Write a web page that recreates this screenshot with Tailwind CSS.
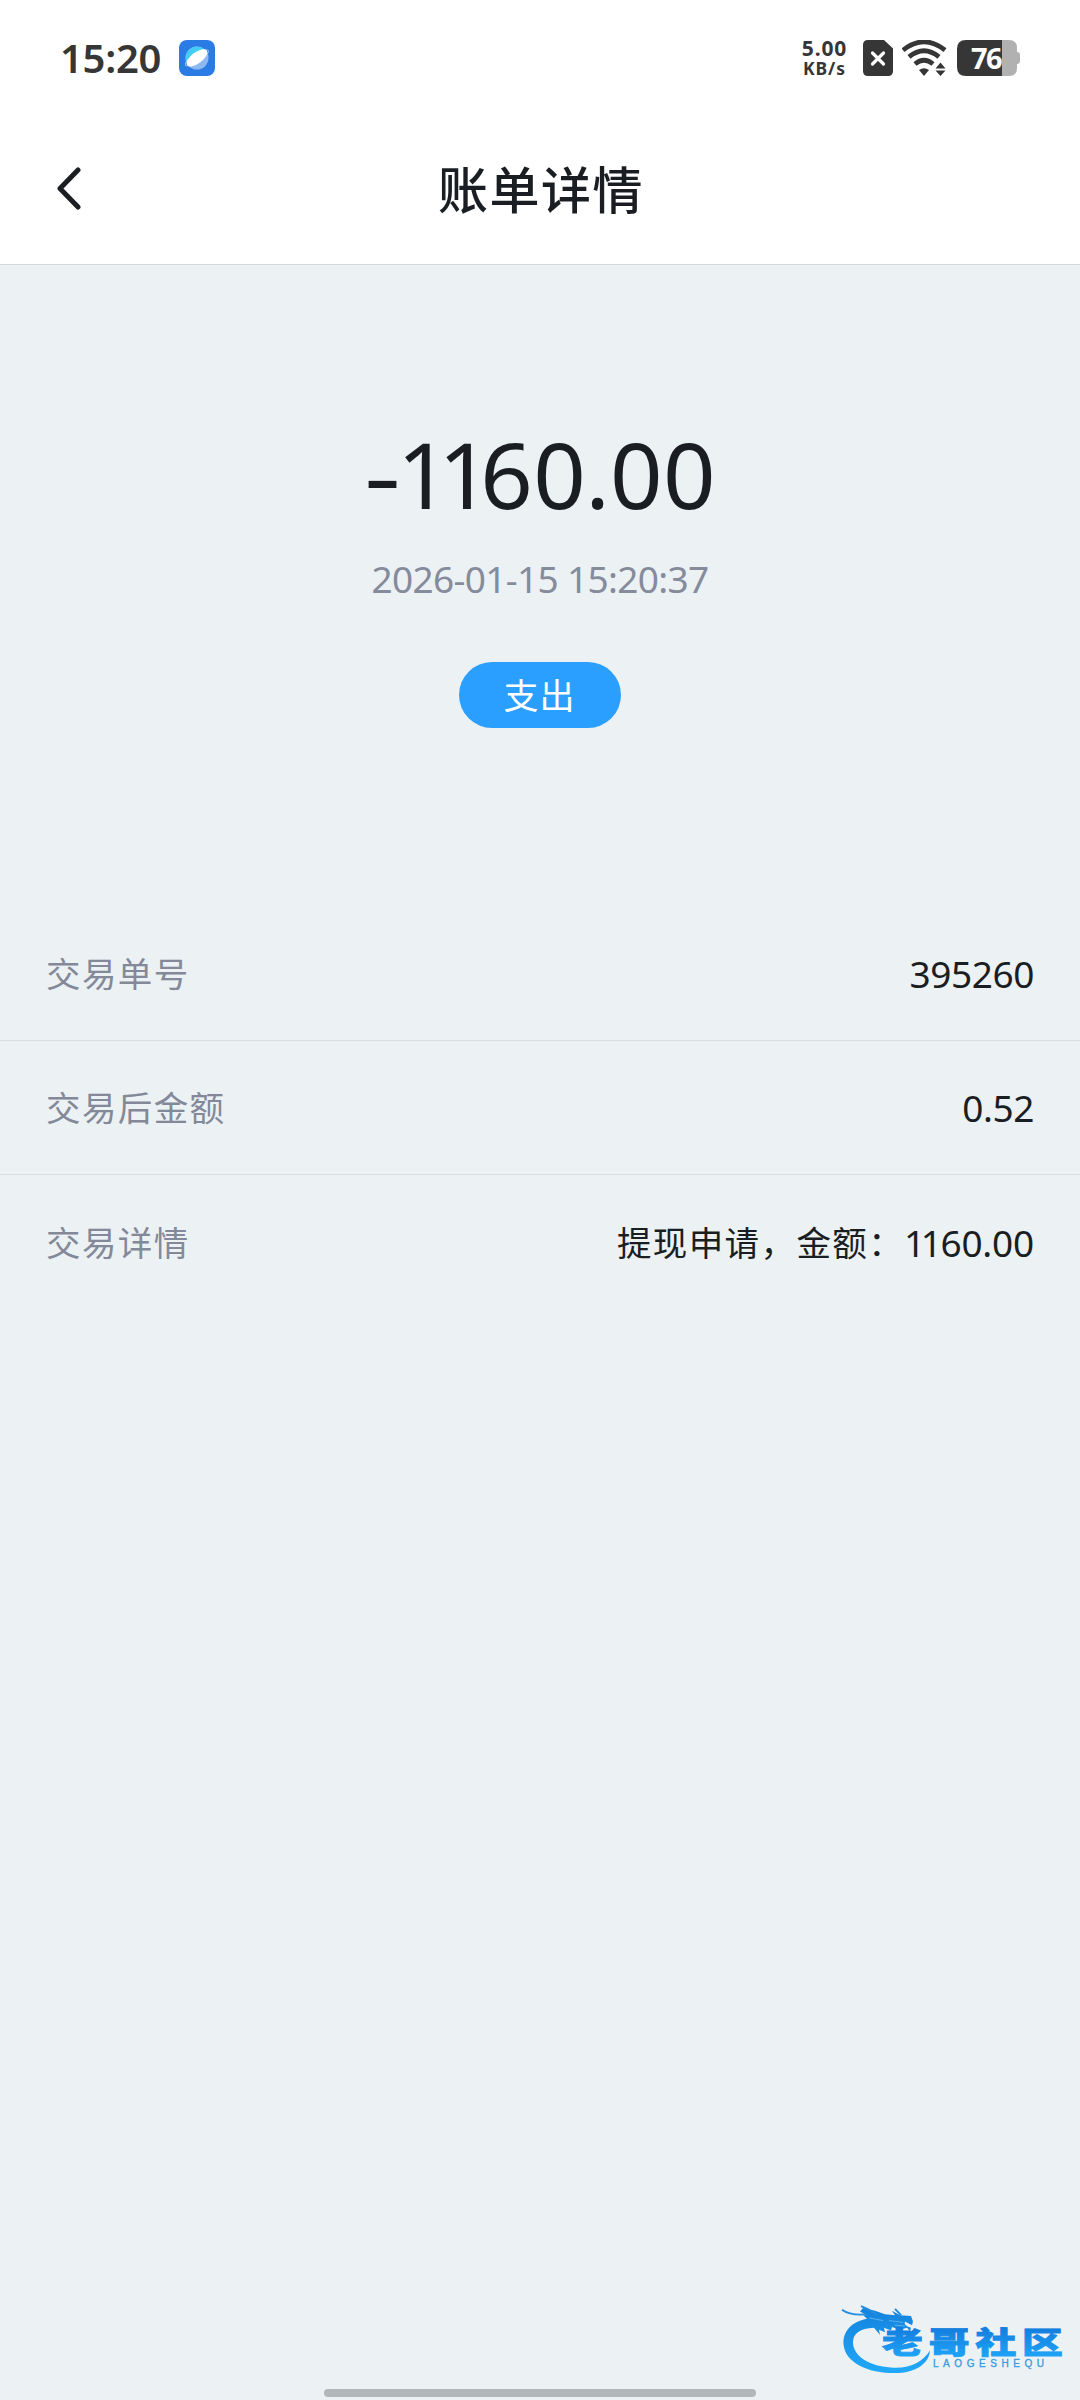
<!DOCTYPE html>
<html lang="zh-CN">
<head>
<meta charset="utf-8">
<title>账单详情</title>
<script src="https://cdn.jsdelivr.net/npm/@tailwindcss/browser@4"></script>
</head>
<body class="bg-[#ecf1f4]">
<div class="relative flex h-[2400px] w-[1080px] flex-col overflow-hidden bg-[#ecf1f4] font-['Noto_Sans','Noto_Sans_CJK_SC',sans-serif] text-[#1a1e22]">
  <!-- status bar -->
  <div class="flex h-[116px] items-center bg-white pr-[60px] pl-[60px] text-[#363636]">
    <div class="w-[119px] text-[40px] leading-[60px] font-semibold tracking-[-0.300px] whitespace-nowrap">15:20</div>
    <svg class="h-9 w-9" viewBox="0 0 36 36">
      <rect width="36" height="36" rx="8" fill="#2a7be4"/>
      <circle cx="18" cy="18" r="11.5" fill="#8db8f1"/>
      <path d="M6.8 20.500A11.500 11.500 0 0 1 26 9.800L9 26Z" fill="#42cdf5"/>
      <path d="M26 10.500Q30 9 29.500 11.500Q28 15 27 17M9 19Q5.500 23 6.500 25.500Q7.500 26.500 10 25.500" fill="none" stroke="#9dc5f7" stroke-width="1"/>
      <ellipse cx="18" cy="17.800" rx="12.300" ry="5.600" transform="rotate(-37 18 17.800)" fill="#fff"/>
    </svg>
    <div class="ml-auto flex items-center">
      <div class="mr-[15px] flex w-[47px] flex-col items-center font-bold">
        <span class="text-[21px] leading-[20px] tracking-[0.900px]">5.00</span>
        <span class="text-[17.500px] leading-[20px] tracking-[0.900px]">KB/s</span>
      </div>
      <svg class="h-9 w-[30px]" viewBox="0 0 30 36">
        <path d="M5 0H21L30 8.500V31Q30 36 25 36H5Q0 36 0 31V5Q0 0 5 0Z" fill="#363636"/>
        <path d="M9.500 13L20.500 24M20.500 13L9.500 24" stroke="#fff" stroke-width="3.200" stroke-linecap="round"/>
      </svg>
      <svg class="ml-[9px] h-9 w-[46px]" viewBox="0 0 46 36">
        <g fill="none" stroke="#363636" stroke-width="4.800">
          <path d="M1 10.200Q22-6.500 43 10.200"/>
          <path d="M7 16.800Q22 4.500 37 16.800"/>
          <path d="M13 24Q22 16.500 31 24"/>
        </g>
        <path d="M17 30Q22 26.500 27 30L22 36Z" fill="#363636"/>
        <path d="M38.500 22.500L43.500 28.500H33.500ZM38.500 36L43.500 30.500H33.500Z" fill="#363636"/>
      </svg>
      <div class="relative ml-[9px] flex h-9 w-[63px] items-center">
        <svg class="absolute inset-0 h-9 w-[63px]" viewBox="0 0 63 36">
          <path d="M45 0H52Q60 0 60 8V12Q63 12 63 15V21Q63 24 60 24V28Q60 36 52 36H45Z" fill="#b1b1b1"/>
          <path d="M9 0H45V36H9Q0 36 0 27V9Q0 0 9 0Z" fill="#363636"/>
        </svg>
        <span class="relative ml-[14px] text-[29px] leading-9 font-bold tracking-[-1.500px] text-white">76</span>
      </div>
    </div>
  </div>
  <!-- title bar -->
  <div class="flex h-[149px] items-center border-b border-[#d5d8db] bg-white">
    <svg class="mb-[4px] ml-[56px] h-[44px] w-[26px]" viewBox="0 0 26 44" fill="none" stroke="#1a1e22" stroke-width="5" stroke-linecap="round" stroke-linejoin="round"><path d="M22 4L4 22.500L22 41"/></svg>
    <h1 class="mr-[82px] flex-1 pl-[2px] text-center text-[50px] leading-[60px] font-medium tracking-[1.500px]">账单详情</h1>
  </div>
  <!-- amount -->
  <div class="flex h-[641px] flex-col items-center">
    <div class="mt-[147px] flex h-[124px] items-center text-[92px] leading-[124px] tracking-[0.300px]"><span class="w-[33px] origin-left scale-x-125">-</span><span class="tracking-[-11.500px]">11</span><span class="ml-[1px]">6</span><span>0</span><span class="ml-[-1px]">.</span><span>00</span></div>
    <div class="mt-[15px] h-[58px] text-[37px] leading-[56px] tracking-[-0.650px] text-[#868b9c]">2026-01-15 15:20:37</div>
    <div class="mt-[53px] mr-px flex h-[66px] w-[162px] items-center justify-center rounded-full bg-[#2b9fff] pt-px text-[35px] leading-[60px] tracking-[1px] text-white">支出</div>
  </div>
  <!-- details -->
  <dl class="flex flex-col">
    <div class="flex h-[135px] items-center justify-between border-b border-[#dbdfe3] pr-[46px] pl-[46px]">
      <dt class="pt-px text-[34.500px] leading-[50px] tracking-[1.400px] text-[#838999]">交易单号</dt>
      <dd class="pt-px text-[37px] leading-[50px] tracking-[-0.400px]">395260</dd>
    </div>
    <div class="flex h-[134px] items-center justify-between border-b border-[#dbdfe3] pr-[46px] pl-[46px]">
      <dt class="pt-px text-[34.500px] leading-[50px] tracking-[1.400px] text-[#838999]">交易后金额</dt>
      <dd class="pt-px text-[37px] leading-[50px] tracking-[-0.400px]">0.52</dd>
    </div>
    <div class="flex h-[135px] items-center justify-between pr-[46px] pl-[46px]">
      <dt class="text-[34.500px] leading-[50px] tracking-[1.400px] text-[#838999]">交易详情</dt>
      <dd class="flex items-center leading-[50px]"><span class="text-[34.500px] tracking-[1.400px]">提现申请，金额：</span><span class="text-[37px] tracking-[-4.500px]">11</span><span class="ml-[3px] text-[37px] tracking-[-0.200px]">60.00</span></dd>
    </div>
  </dl>
  <!-- home indicator -->
  <div class="mt-auto mb-[3px] h-2 w-[432px] self-center rounded-full bg-[#b2b7ba]"></div>
  <!-- watermark -->
  <svg class="absolute top-[2295px] left-[835px] h-[85px] w-[235px]" viewBox="0 0 235 85">
    <defs>
      <linearGradient id="g" x1="0" y1="0" x2="0" y2="1"><stop offset="0" stop-color="#1482dc"/><stop offset="1" stop-color="#20a9fa"/></linearGradient>
      <linearGradient id="t" x1="0" y1="0" x2="0" y2="1"><stop offset=".2" stop-color="#127bdc"/><stop offset="1" stop-color="#20a9fa"/></linearGradient>
    </defs>
    <g transform="translate(0 7.500) scale(1 .905)">
    <path d="M32 18C14 22 8 34 8.500 46C10 66 32 78 60 78C80 78 94 68 95 53C88 65 76 73 58 72C34 71 18 59 18 44C18 34 25 29 39 28L45 36L44 30L50 33L49 28L56 31L57 27L65 30L72 28L75 32L76 28Q68 25 70 21L77 25L78 21L76 15L65 14L57 9L60 14L50 13L40 9L28 6L25 10L30 13L29 15Z" fill="url(#g)"/>
    <path d="M7 8Q16 15 32 13M26 4Q37 9 42 14M60 7L66 14" fill="none" stroke="#238ddf" stroke-width="2"/>
    <path d="M34 17L48 20M54 20L68 22M60 25L70 26" fill="none" stroke="#5fb1ec" stroke-width="1"/>
    </g>
    <g font-family="'Noto Sans CJK SC',sans-serif" font-weight="900" font-size="30" fill="url(#t)" stroke="url(#t)" stroke-width=".9">
      <text transform="translate(47 57.500) scale(1.360 1)" x="0" y="0" textLength="133" lengthAdjust="spacing">老哥社区</text>
    </g>
    <text x="98" y="72" font-family="'Liberation Sans',sans-serif" font-size="10" fill="#349cdf" stroke="#349cdf" stroke-width=".3" textLength="111" lengthAdjust="spacing">LAOGESHEQU</text>
  </svg>
</div>
</body>
</html>
